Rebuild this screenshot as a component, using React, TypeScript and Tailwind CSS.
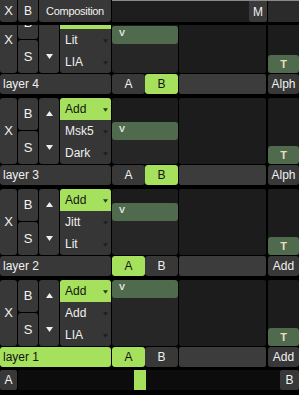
import React from "react";

type Layer = {
  name: string;
  rows: string[];
  ab: "A" | "B";
  thumb: number;
  mode: string;
  sel?: boolean;
};

const layers: Layer[] = [
  { name: "layer 4", rows: ["Add", "Lit", "LIA"], ab: "B", thumb: 19, mode: "Alph" },
  { name: "layer 3", rows: ["Add", "Msk5", "Dark"], ab: "B", thumb: 24, mode: "Alph" },
  { name: "layer 2", rows: ["Add", "Jitt", "Lit"], ab: "A", thumb: 14, mode: "Add" },
  { name: "layer 1", rows: ["Add", "Add", "LIA"], ab: "A", thumb: 0, mode: "Add", sel: true },
];

function Tri({ down, color, w = 7, h = 5 }: { down?: boolean; color: string; w?: number; h?: number }) {
  return (
    <svg width={w} height={h} viewBox="0 0 7 5" className="block">
      <polygon points={down ? "0,0 7,0 3.5,5" : "3.5,0 7,5 0,5"} fill={color} />
    </svg>
  );
}

function LayerBlock({ l }: { l: Layer }) {
  return (
    <div className="flex flex-col h-[91px] shrink-0">
      <div className="flex h-[66px] gap-px">
        <div className="w-[17px] bg-[#383838] rounded-[3px] flex items-center justify-center text-[13px] text-[#f2f2f2]">
          X
        </div>
        <div className="w-[20px] flex flex-col gap-px">
          <div className="h-[32px] bg-[#383838] rounded-[3px] flex items-center justify-center text-[13px] text-[#f2f2f2]">
            B
          </div>
          <div className="flex-1 bg-[#383838] rounded-[3px] flex items-center justify-center text-[13px] text-[#f2f2f2]">
            S
          </div>
        </div>
        <div className="w-[20px] bg-[#383838] rounded-[3px] flex flex-col items-center pt-[13px]">
          <Tri color="#f0f0f0" />
          <div className="mt-[29px]">
            <Tri down color="#f0f0f0" />
          </div>
        </div>
        <div className="w-[51px] bg-[#363636] rounded-[3px] flex flex-col overflow-hidden">
          {l.rows.map((r, i) => (
            <div
              key={i}
              className={
                i === 0
                  ? "h-[22px] bg-[#a5e15c] flex items-center justify-between pl-[5px] pr-[3px] text-[12px] text-[#141414]"
                  : "h-[22px] flex items-center justify-between pl-[5px] pr-[3px] text-[12px] text-[#f0f0f0]"
              }
            >
              <span>{r}</span>
              <div className="mt-[2px]">
                <Tri down color={i === 0 ? "#2a3a1c" : "#1e1e1e"} w={5} h={4} />
              </div>
            </div>
          ))}
        </div>
        <div className="w-[66px] bg-[#262626] rounded-[3px] flex flex-col overflow-hidden">
          <div className="bg-[#1c1c1c] shrink-0" style={{ height: l.thumb }} />
          <div className="h-[18px] bg-[#4f6a4c] rounded-[3px] pl-[7px] pt-[2px] text-[9px] leading-[10px] text-[#e6e6e6] font-bold shrink-0">
            V
          </div>
        </div>
        <div className="w-[87px] bg-[#1c1c1c] rounded-[2px]" />
        <div className="ml-px w-[31px] bg-[#1c1c1c] rounded-[2px] flex flex-col justify-end">
          <div className="h-[18px] bg-[#4f6a4c] rounded-[3px] flex items-center justify-center text-[11px] font-bold text-[#eadfc0]">
            T
          </div>
        </div>
      </div>
      <div className="mt-px flex h-[20px] gap-px">
        <div
          className={
            l.sel
              ? "w-[111px] bg-[#a5e15c] rounded-[3px] flex items-center pl-[3px] text-[12px] text-[#141414]"
              : "w-[111px] bg-[#383838] rounded-[3px] flex items-center pl-[3px] text-[12px] text-[#f0f0f0]"
          }
        >
          {l.name}
        </div>
        <div className="w-[66px] flex">
          <div
            className={
              l.ab === "A"
                ? "w-[33px] bg-[#a5e15c] rounded-[3px] flex items-center justify-center text-[12px] text-[#141414]"
                : "w-[33px] bg-[#383838] rounded-[3px] flex items-center justify-center text-[12px] text-[#f0f0f0]"
            }
          >
            A
          </div>
          <div
            className={
              l.ab === "B"
                ? "flex-1 bg-[#a5e15c] rounded-[3px] flex items-center justify-center text-[12px] text-[#141414]"
                : "flex-1 bg-[#383838] rounded-[3px] flex items-center justify-center text-[12px] text-[#f0f0f0]"
            }
          >
            B
          </div>
        </div>
        <div className="w-[87px] bg-[#3c3c3c] rounded-[2px]" />
        <div className="ml-px w-[31px] bg-[#383838] rounded-[3px] flex items-center justify-center text-[12px] text-[#f0f0f0]">
          {l.mode}
        </div>
      </div>
    </div>
  );
}

export default function App() {
  return (
    <div
      className="w-[299px] h-[395px] bg-black overflow-hidden flex flex-col"
      style={{ fontFamily: '"Liberation Sans", Arial, sans-serif' }}
    >
      <div className="h-[22px] flex gap-px shrink-0">
        <div className="w-[17px] bg-[#383838] rounded-b-[3px] flex items-center justify-center text-[13px] text-[#f2f2f2]">
          X
        </div>
        <div className="w-[20px] bg-[#383838] rounded-b-[3px] flex items-center justify-center text-[12px] text-[#f2f2f2]">
          B
        </div>
        <div className="w-[72px] bg-[#383838] rounded-b-[3px] flex items-center justify-center text-[11px] tracking-[-0.3px] text-[#f2f2f2]">
          Composition
        </div>
        <div className="flex-1 flex border-t border-[#8a8a8a]">
          <div className="flex-1 bg-[#1e1e1e]" />
          <div className="w-[18px] bg-[#3a3a3a] rounded-b-[2px] flex items-center justify-center text-[12px] text-[#f2f2f2]">
            M
          </div>
          <div className="w-px" />
          <div className="w-[31px] bg-[#2b2b2b]" />
        </div>
      </div>
      <div className="h-[342px] mt-[3px] overflow-hidden shrink-0">
        <div className="flex flex-col -mt-[18px]">
          {layers.map((l) => (
            <LayerBlock key={l.name} l={l} />
          ))}
        </div>
      </div>
      <div className="mt-[3px] h-[20px] flex shrink-0">
        <div className="w-[17px] bg-[#383838] rounded-[2px] flex items-center justify-center text-[12px] text-[#f2f2f2]">
          A
        </div>
        <div className="flex-1 bg-[#0c0c0c] ml-px flex">
          <div className="w-[116px]" />
          <div className="w-[12px] bg-[#a5e15c]" />
        </div>
        <div className="w-[19px] bg-[#383838] rounded-[2px] flex items-center justify-center text-[12px] text-[#f2f2f2]">
          B
        </div>
      </div>
    </div>
  );
}
